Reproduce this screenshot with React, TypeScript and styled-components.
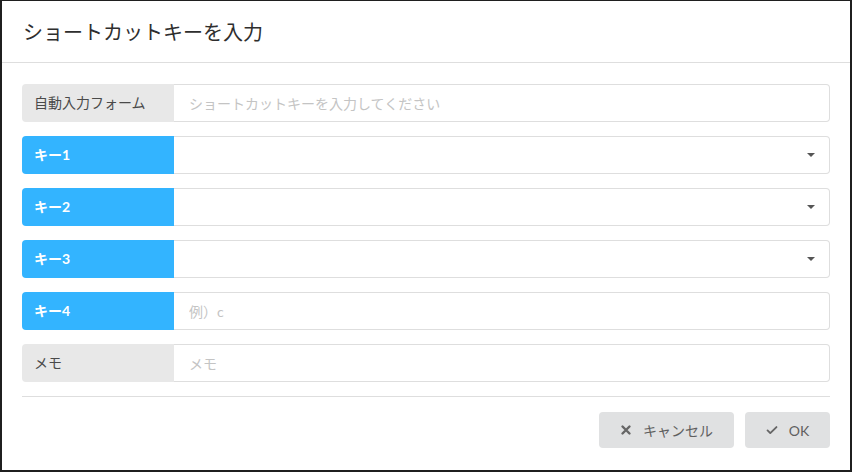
import React from "react";
import styled, { createGlobalStyle } from "styled-components";

const Global = createGlobalStyle`
  html, body { margin: 0; padding: 0; background: #1f1f1f; }
  body { font-family: Lato, "Noto Sans CJK JP", "Noto Sans", sans-serif; }
  * { box-sizing: border-box; }
`;

const Modal = styled.div`
  width: 848px;
  height: 469px;
  margin: 1px 2px 2px 2px;
  background: #fff;
  display: flex;
  flex-direction: column;
`;

const Header = styled.div`
  height: 62px;
  padding: 0 21px 1px 21px;
  display: flex;
  align-items: center;
  border-bottom: 1px solid #dedede;
  font-size: 20px;
  color: #2e2e2e;
  font-weight: 400;
`;

const Content = styled.div`
  padding: 21px 20px 0 20px;
  display: flex;
  flex-direction: column;
  gap: 14px;
`;

const Row = styled.div`
  display: flex;
  height: 38px;
`;

const Label = styled.div<{ $accent?: boolean }>`
  width: 152px;
  flex: none;
  display: flex;
  align-items: center;
  padding: 0 0 3px 12px;
  font-size: 14px;
  border-radius: 4px 0 0 4px;
  background: ${(p) => (p.$accent ? "#33b4ff" : "#e8e8e8")};
  color: ${(p) => (p.$accent ? "#fff" : "#4a4a4a")};
  font-weight: ${(p) => (p.$accent ? 700 : 400)};
`;

const Field = styled.div`
  flex: 1;
  display: flex;
  align-items: center;
  border: 1px solid #dedede;
  border-left: none;
  border-radius: 0 4px 4px 0;
  padding: 0 14px 0 15px;
  font-size: 14px;
  color: #c2c2c2;
`;

const Input = styled.input`
  flex: 1;
  border: none;
  outline: none;
  padding: 0;
  font: inherit;
  font-size: 14px;
  color: #333;
  background: transparent;
  &::placeholder { color: #c4c4c4; }
`;

const Caret = styled.span`
  margin-left: auto;
  width: 0;
  height: 0;
  border-left: 4px solid transparent;
  border-right: 4px solid transparent;
  border-top: 4px solid #555;
`;

const Divider = styled.div`
  height: 1px;
  background: #dedede;
  margin: 14px 20px 0 20px;
`;

const Actions = styled.div`
  display: flex;
  justify-content: flex-end;
  gap: 11px;
  padding: 15px 20px 0 20px;
`;

const Button = styled.button<{ $w: number }>`
  width: ${(p) => p.$w}px;
  height: 36px;
  border: none;
  border-radius: 4px;
  background: #e0e1e2;
  color: #5f5f5f;
  font-family: Lato, "Noto Sans CJK JP", sans-serif;
  font-size: 14px;
  display: flex;
  align-items: center;
  justify-content: center;
  gap: 11px;
  padding: 0;
`;

const Icon = styled.svg`
  width: 12px;
  height: 12px;
  flex: none;
`;

const SelectRow = ({ label }: { label: string }) => (
  <Row>
    <Label $accent>{label}</Label>
    <Field>
      <Caret />
    </Field>
  </Row>
);

export default function App() {
  return (
    <>
      <Global />
      <Modal>
        <Header>ショートカットキーを入力</Header>
        <Content>
          <Row>
            <Label>自動入力フォーム</Label>
            <Field>
              <Input placeholder="ショートカットキーを入力してください" />
            </Field>
          </Row>
          <SelectRow label="キー1" />
          <SelectRow label="キー2" />
          <SelectRow label="キー3" />
          <Row>
            <Label $accent>キー4</Label>
            <Field>
              <Input placeholder="例）c" />
            </Field>
          </Row>
          <Row>
            <Label>メモ</Label>
            <Field>
              <Input placeholder="メモ" />
            </Field>
          </Row>
        </Content>
        <Divider />
        <Actions>
          <Button $w={135}>
            <Icon viewBox="0 0 12 12">
              <path d="M2.5 2.5 L9.5 9.5 M9.5 2.5 L2.5 9.5" stroke="#666" strokeWidth="2.4" strokeLinecap="round" />
            </Icon>
            キャンセル
          </Button>
          <Button $w={85}>
            <Icon viewBox="0 0 14 12">
              <path d="M1.8 6.5 L5 9.6 L12.2 2.6" stroke="#666" strokeWidth="2.2" fill="none" strokeLinecap="round" strokeLinejoin="round" />
            </Icon>
            OK
          </Button>
        </Actions>
      </Modal>
    </>
  );
}
